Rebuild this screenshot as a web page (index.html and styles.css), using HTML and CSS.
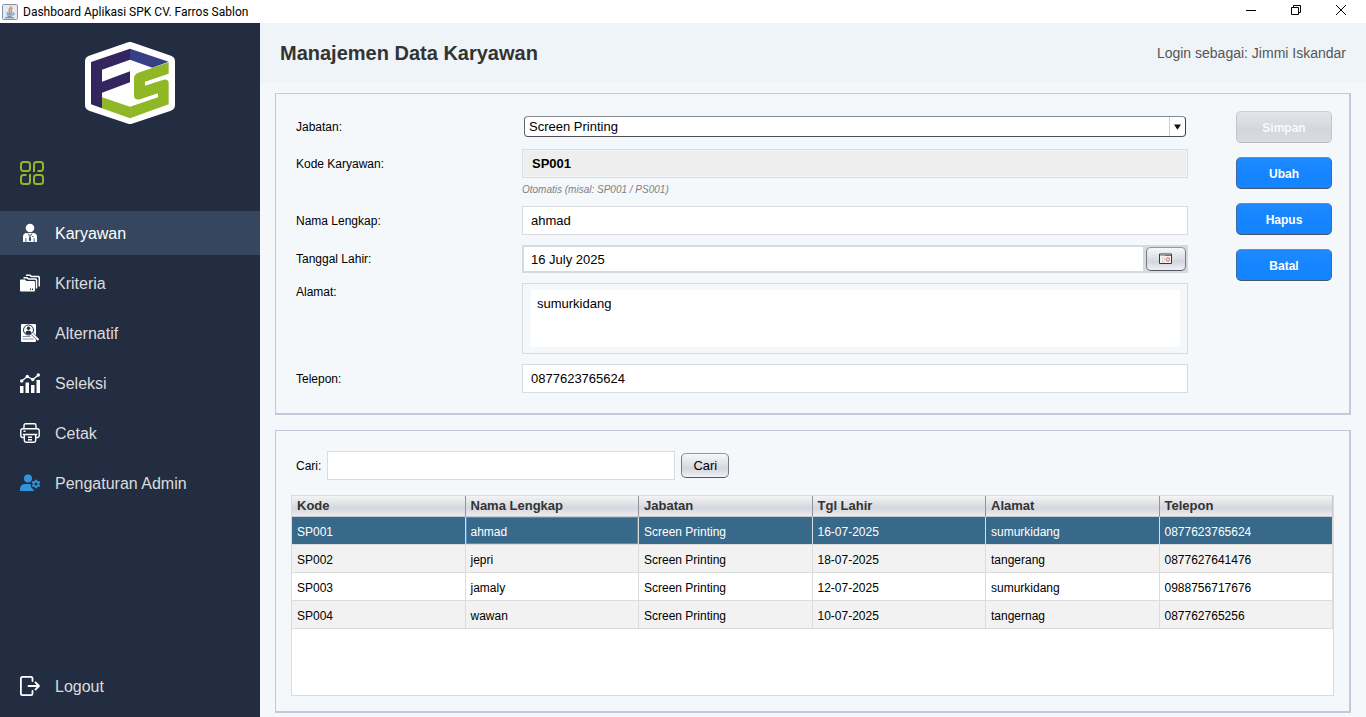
FILE: index.html
```html
<!DOCTYPE html>
<html lang="id">
<head>
<meta charset="utf-8">
<title>Dashboard Aplikasi SPK CV. Farros Sablon</title>
<link rel="stylesheet" href="styles.css">
</head>
<body>
<div class="titlebar">
  <svg class="app-icon" viewBox="0 0 16 16" aria-hidden="true">
    <rect x="0.5" y="0.5" width="15" height="15" rx="1" fill="#e3ebf1" stroke="#8295a6"/>
    <path d="M9 2c.8 1.700-3 2.600-2 4.500.3.700 1 1 .9 1.700M10.700 4c-1.700.7-2.200 1.500-1.300 2.600.3.500 0 1-.4 1.400" fill="none" stroke="#e8792b" stroke-width="1.200"/>
    <path d="M4.500 9h6M5 10.800h5M5.500 12.300h4M3 13.800h9M10.700 9c2-.4 2.200 1.500-.4 2.300" fill="none" stroke="#4f7ba3" stroke-width="1"/>
  </svg>
  <span class="app-title">Dashboard Aplikasi SPK CV. Farros Sablon</span>
  <div class="window-controls">
    <button class="window-button" type="button" aria-label="Minimize"><svg viewBox="0 0 12 12"><path d="M1 6.500h10" /></svg></button>
    <button class="window-button" type="button" aria-label="Restore"><svg viewBox="0 0 12 12"><path d="M1.500 3.500h7v7h-7zM3.500 3.500v-2h7v7h-2"/></svg></button>
    <button class="window-button" type="button" aria-label="Close"><svg viewBox="0 0 12 12"><path d="M1 1l10 10M11 1L1 11"/></svg></button>
  </div>
</div>
<div class="app">
  <aside class="sidebar">
    <svg class="logo" viewBox="30 20 270 246" role="img" aria-label="FS">
      <path d="M165 38L282 78V209L165 248L48 209V78z" fill="#fff" stroke="#fff" stroke-width="36" stroke-linejoin="round"/>
      <path d="M48 80L165 40V73L81 103V139L165 108V141L81 172V219L48 207z" fill="#33265f"/>
      <path d="M165 40L281 79L232 97L165 73z" fill="#373f85"/>
      <path d="M281 81V115L210 139V151L266 133Q281 130 281 144V207L165 249L81 219V186L165 214L249 186V174L195 192Q177 196 177 179V129Q177 117 190 112z" fill="#8fb726"/>
    </svg>
    <svg class="grid-icon" viewBox="0 0 24 24" fill="none" stroke="#8fb726" stroke-width="2" aria-hidden="true">
      <rect x="1" y="1" width="9" height="9" rx="2.500"/>
      <path d="M14 11V3.500Q14 1 16.500 1H20.500Q23 1 23 3.500V7.500Q23 10 20.500 10H17.500"/>
      <path d="M10 13V20.500Q10 23 7.500 23H3.500Q1 23 1 20.500V16.500Q1 14 3.500 14H6.500"/>
      <rect x="14" y="14" width="9" height="9" rx="2.500"/>
    </svg>
    <nav class="menu">
      <a class="menu-item active" href="#karyawan">
        <svg viewBox="0 0 20 20"><circle cx="10" cy="5" r="4.300" fill="#fff"/><path d="M3 19V14Q3 10 7 10H13Q17 10 17 14V19z" fill="#fff"/><path d="M8 10.500l1 2M12 10.500l-1 2M5.800 15v4M14.200 15v4M12 13.500h1.500" fill="none" stroke="#36465e" stroke-width=".8"/><path d="M9.300 11.500h1.400l-.2 1.500.7 4-1.200 1.500-1.200-1.500.7-4z" fill="#36465e"/></svg>
        <span>Karyawan</span></a>
      <a class="menu-item" href="#kriteria">
        <svg viewBox="0 0 20 20"><path d="M0 7.500Q0 6.500 1 6.500H5L6.500 8H14Q15 8 15 9V17.500Q15 18.500 14 18.500H1Q0 18.500 0 17.500z" fill="#fff"/><path d="M3.500 4.800H7L8.500 6H15.500Q16.500 6 16.500 7V15.500M6 2.300H10L11.500 3.500H18Q19.300 3.500 19.300 4.500V13.500" fill="none" stroke="#fff" stroke-width="1.500"/><path d="M10.500 15.500v1.500M12.500 15.500v1.500" stroke="#232d41"/></svg>
        <span>Kriteria</span></a>
      <a class="menu-item" href="#alternatif">
        <svg viewBox="0 0 20 20"><rect x="1" y="1" width="15" height="18" rx="1" fill="#fff"/><circle cx="8.500" cy="7" r="5" fill="none" stroke="#232d41" stroke-width="1"/><circle cx="8.500" cy="5.300" r="1.700" fill="#232d41"/><path d="M5.300 10Q5.700 7.500 8.500 7.500T11.700 10Q8.500 13 5.300 10z" fill="#232d41"/><path d="M12.500 11l5.500 5.500" stroke="#232d41" stroke-width="3"/><path d="M12 10.500l6.500 6.500" stroke="#fff" stroke-width="2"/><path d="M2.500 13.500h8M2.500 16h11" stroke="#8b929e" stroke-width="1.200"/></svg>
        <span>Alternatif</span></a>
      <a class="menu-item" href="#seleksi">
        <svg viewBox="0 0 20 20" fill="#fff"><path d="M0 13h3.500v7H0zM5.500 9.500H9V20H5.500zM11 12h3.500v8H11zM16.500 7H20v13h-3.500z"/><path d="M1.700 8L7.300 3.500L12.800 6.500L18.500 2" fill="none" stroke="#fff" stroke-width="1.300"/><circle cx="1.700" cy="8" r="1.700"/><circle cx="7.300" cy="3.500" r="1.700"/><circle cx="12.800" cy="6.500" r="1.700"/><circle cx="18.300" cy="2" r="1.700"/></svg>
        <span>Seleksi</span></a>
      <a class="menu-item" href="#cetak">
        <svg viewBox="0 0 20 20" fill="none" stroke="#fff" stroke-width="1.400"><path d="M4 5.500V2.500Q4 .8 5.700 .8H14.300Q16 .8 16 2.500V5.500M4 14.500H2.500Q.8 14.500 .8 12.800V7.700Q.8 5.700 2.800 5.700H17.200Q19.200 5.700 19.200 7.700V12.800Q19.200 14.500 17.500 14.500H16M2.800 11.500H17.200M4.300 11.500V17.500Q4.300 19.200 6 19.200H14Q15.700 19.200 15.700 17.500V11.500M8 14.300h4M8 16.700h4M3.500 8.300h2"/></svg>
        <span>Cetak</span></a>
      <a class="menu-item" href="#admin">
        <svg viewBox="0 0 20 20"><circle cx="8" cy="5.500" r="4" fill="#3195dc"/><path d="M0 18V16Q.5 11 5 11H10.500L11 14L14.500 18z" fill="#3195dc"/><circle cx="16" cy="11" r="2.500" fill="none" stroke="#3195dc" stroke-width="1.800"/><path d="M16 6.800v1.700M16 13.500v1.700M12.200 8.900l1.600.9M18.200 12.200l1.600.9M12.200 13.100l1.600-.9M18.200 9.800l1.600-.9" stroke="#3195dc" stroke-width="1.800"/></svg>
        <span>Pengaturan Admin</span></a>
    </nav>
    <a class="menu-item logout" href="#logout">
      <svg viewBox="0 0 20 20" fill="none" stroke="#fff" stroke-width="1.800" stroke-linecap="round" stroke-linejoin="round"><path d="M12.500 5V2.500Q12.500 .9 11 .9H2.500Q.9 .9 .9 2.500V17.500Q.9 19.100 2.500 19.100H11Q12.500 19.100 12.500 17.500V15M8.500 10H19M15.500 6.500L19 10L15.500 13.500"/></svg>
      <span>Logout</span></a>
  </aside>
  <main class="content">
    <header class="page-header">
      <h1>Manajemen Data Karyawan</h1>
      <span class="login-info">Login sebagai: Jimmi Iskandar</span>
    </header>
    <form class="panel form-panel">
      <div class="fields">
        <div class="row">
          <label for="jabatan">Jabatan:</label>
          <div class="combo">
            <select id="jabatan"><option>Screen Printing</option></select>
            <svg class="combo-arrow" viewBox="0 0 8 6" aria-hidden="true"><path d="M0 0h8L4 6z"/></svg>
          </div>
        </div>
        <div class="row code-row">
          <label for="kode">Kode Karyawan:</label>
          <input class="text-field code" id="kode" type="text" value="SP001" readonly>
          <span class="hint">Otomatis (misal: SP001 / PS001)</span>
        </div>
        <div class="row">
          <label for="nama">Nama Lengkap:</label>
          <input class="text-field" id="nama" type="text" value="ahmad">
        </div>
        <div class="row">
          <label for="lahir">Tanggal Lahir:</label>
          <div class="date-field">
            <input id="lahir" type="text" value="16 July 2025">
            <button class="metal-button" type="button" aria-label="Pilih tanggal">
              <svg viewBox="0 0 14 12"><path d="M.5 1h12v9.500H.5z" fill="#f5f2ef" stroke="#393939"/><path d="M1 2.500h6" stroke="#e0a33d"/><path d="M6 2.500h6" stroke="#5371a8"/><path d="M3.500 4v6M5.500 4v6" stroke="#d8d8d8"/><circle cx="9" cy="6.500" r="1.700" fill="none" stroke="#e65a5a"/></svg>
            </button>
          </div>
        </div>
        <div class="row top">
          <label for="alamat">Alamat:</label>
          <div class="area-frame"><textarea id="alamat">sumurkidang</textarea></div>
        </div>
        <div class="row">
          <label for="telepon">Telepon:</label>
          <input class="text-field" id="telepon" type="text" value="0877623765624">
        </div>
      </div>
      <div class="actions">
        <button class="action-button" type="button" disabled>Simpan</button>
        <button class="action-button" type="button">Ubah</button>
        <button class="action-button" type="button">Hapus</button>
        <button class="action-button" type="button">Batal</button>
      </div>
    </form>
    <section class="panel list-panel">
      <div class="search">
        <label for="cari">Cari:</label>
        <input class="text-field search-field" id="cari" type="text">
        <button class="metal-button search-button" type="button">Cari</button>
      </div>
      <div class="table-frame">
        <table>
          <thead><tr><th>Kode</th><th>Nama Lengkap</th><th>Jabatan</th><th>Tgl Lahir</th><th>Alamat</th><th>Telepon</th></tr></thead>
          <tbody>
            <tr class="selected"><td>SP001</td><td class="focused">ahmad</td><td>Screen Printing</td><td>16-07-2025</td><td>sumurkidang</td><td>0877623765624</td></tr>
            <tr><td>SP002</td><td>jepri</td><td>Screen Printing</td><td>18-07-2025</td><td>tangerang</td><td>0877627641476</td></tr>
            <tr><td>SP003</td><td>jamaly</td><td>Screen Printing</td><td>12-07-2025</td><td>sumurkidang</td><td>0988756717676</td></tr>
            <tr><td>SP004</td><td>wawan</td><td>Screen Printing</td><td>10-07-2025</td><td>tangernag</td><td>087762765256</td></tr>
          </tbody>
        </table>
      </div>
    </section>
  </main>
</div>
</body>
</html>
```

FILE: styles.css
```css
* { box-sizing: border-box; }

body {
  margin: 0;
  min-height: 100vh;
  display: flex;
  flex-direction: column;
  background: #f4f8fb;
  color: #000;
  font: 12px/16px "Liberation Sans", Arial, sans-serif;
}

button, input, select, textarea {
  margin: 0;
  font: 13px/16px "Liberation Sans", Arial, sans-serif;
  color: #000;
  outline: none;
}

/* Title bar */
.titlebar {
  display: flex;
  align-items: center;
  gap: 5px;
  height: 23px;
  padding-left: 2px;
  background: #fff;
}
.app-icon { width: 16px; height: 16px; }
.app-title { font: 12px/16px Roboto, "Open Sans", sans-serif; }
.window-controls { display: flex; margin-left: auto; padding-right: 3px; height: 20px; align-self: flex-start; }
.window-button {
  width: 45px;
  padding: 0;
  border: 0;
  background: none;
  display: flex;
  align-items: center;
  justify-content: center;
}
.window-button svg { width: 12px; height: 12px; fill: none; stroke: #000; }

.app { display: flex; flex: 1; }

/* Sidebar */
.sidebar {
  display: flex;
  flex-direction: column;
  flex: none;
  width: 260px;
  padding-bottom: 9px;
  background: #232d41;
}
.logo { width: 90px; height: 82px; margin: 19px auto 0; }
.grid-icon { width: 24px; height: 24px; margin: 37px 0 26px 20px; }
.menu { display: flex; flex-direction: column; gap: 6px; }
.menu-item {
  display: flex;
  align-items: center;
  gap: 15px;
  height: 44px;
  padding-left: 20px;
  color: #dcdcdc;
  font-size: 16px;
  line-height: 20px;
  text-decoration: none;
}
.menu-item svg { width: 20px; height: 20px; }
.menu-item span { padding-top: 2px; }
.menu-item.active { background: #36465e; color: #fff; }
.logout { margin-top: auto; }

/* Content */
.content { display: flex; flex-direction: column; flex: 1; min-width: 0; }
.page-header {
  display: flex;
  align-items: center;
  justify-content: space-between;
  height: 60px;
  padding: 0 20px;
  background: #eff4f8;
}
h1 { margin: 0; font-size: 20px; line-height: 24px; color: #333; }
.login-info { font-size: 14px; color: #555; }

.panel {
  border: 1px solid #c5c7dc;
  border-right-width: 2px;
  border-bottom-width: 2px;
}

/* Form */
.form-panel {
  display: flex;
  gap: 48px;
  margin: 10px 15px 15px;
  padding: 0 17px 0 20px;
}
.fields { display: flex; flex-direction: column; flex: 1; gap: 10px; padding: 20px 0; }
.row { display: grid; grid-template-columns: 226px 1fr; align-items: center; }
.row.top { align-items: start; }
.row label { line-height: 18px; }
.text-field {
  width: 100%;
  height: 29px;
  padding: 0 8px;
  background: #fff;
  border: 1px solid #d9dbe0;
}
.code {
  box-shadow: inset 0 0 0 1px #f4f5f7;
  background: #eee;
  font-weight: bold;
  padding-left: 9px;
}
.hint {
  grid-column: 2;
  margin-top: 6px;
  font-size: 10px;
  line-height: 12px;
  font-style: italic;
  color: #808080;
}
.combo { display: grid; align-items: center; padding: 2px; }
.combo select {
  grid-area: 1 / 1;
  width: 100%;
  height: 21px;
  padding: 0 20px 0 4px;
  appearance: none;
  border: 1px solid;
  border-color: #858a94 #2c4359 #4c4f57 #5f646e;
  border-radius: 4px;
  background: linear-gradient(90deg, #fff calc(100% - 16px), #cfd1d6 calc(100% - 16px), #cfd1d6 calc(100% - 15px), #fff calc(100% - 15px));
}
.combo-arrow {
  grid-area: 1 / 1;
  justify-self: end;
  width: 7px;
  height: 6px;
  margin-right: 5px;
  fill: #111;
  pointer-events: none;
}
.date-field {
  display: flex;
  gap: 3px;
  height: 28px;
  padding: 2px;
  background: #d6d9df;
}
.date-field input { flex: 1; min-width: 0; padding: 2px 7px 0; border: 0; background: #fff; }
.date-field .metal-button { width: 40px; padding: 0; }
.metal-button {
  display: flex;
  align-items: center;
  justify-content: center;
  border: 1px solid;
  border-color: #94969d #787a82 #55575e #787a82;
  border-radius: 5px;
  background: linear-gradient(#f8f8fa, #dcdee4 48%, #d3d6dd 62%, #eef0f5);
}
.metal-button svg { width: 14px; height: 12px; }
.area-frame { display: flex; height: 71px; padding: 6px 7px 6px 8px; border: 1px solid #d9dbe0; }
textarea { flex: 1; padding: 6px; border: 0; resize: none; background: #fff; }

.actions { display: flex; flex-direction: column; gap: 14px; width: 96px; padding-top: 17px; }
.action-button {
  height: 32px;
  padding: 2px 0 0;
  border: 1px solid;
  border-color: #6d8cb0 #3b6ba6 #44546a #3b6ba6;
  border-radius: 5px;
  background: linear-gradient(#1f8aff, #1484ff 60%);
  color: #fff;
  font-size: 12px;
  font-weight: bold;
}
.action-button:disabled {
  border-color: #cbcdd2 #c3c5cb #b9bbc2 #c3c5cb;
  background: linear-gradient(#e2e5e9, #d3d6dd 60%, #d9dce3);
  color: #fafafa;
}

/* Employee list */
.list-panel {
  display: flex;
  flex-direction: column;
  flex: 1;
  gap: 15px;
  margin: 0 15px 4px;
  padding: 20px 15px 15px;
}
.search { display: flex; align-items: center; gap: 6px; padding-left: 5px; }
.search-field { width: 348px; }
.search-button { width: 48px; height: 25px; padding: 0; }
.table-frame { flex: 1; background: #fff; border: 1px solid #d9dbe0; }
table { width: 100%; table-layout: fixed; border-collapse: separate; border-spacing: 0; }
th {
  height: 21px;
  padding: 0 5px;
  text-align: left;
  font-size: 13px;
  line-height: 16px;
  color: #333;
  border-right: 1px solid #92949b;
  border-bottom: 1px solid #c8cad0;
  background: linear-gradient(#f4f4f6, #dcdee3 45%, #d4d7dd 60%, #ebecf1);
}
th:last-child { border-right-color: #c8cad0; }
td {
  height: 28px;
  padding: 2px 5px 0;
  border-right: 1px solid #dcdcdc;
  border-bottom: 1px solid #dcdcdc;
}
tbody tr:nth-child(even) { background: #f2f2f2; }
tbody .selected { background: #39698a; color: #fff; }
.focused { box-shadow: inset 0 0 0 1px #5a8bc0; }
```
